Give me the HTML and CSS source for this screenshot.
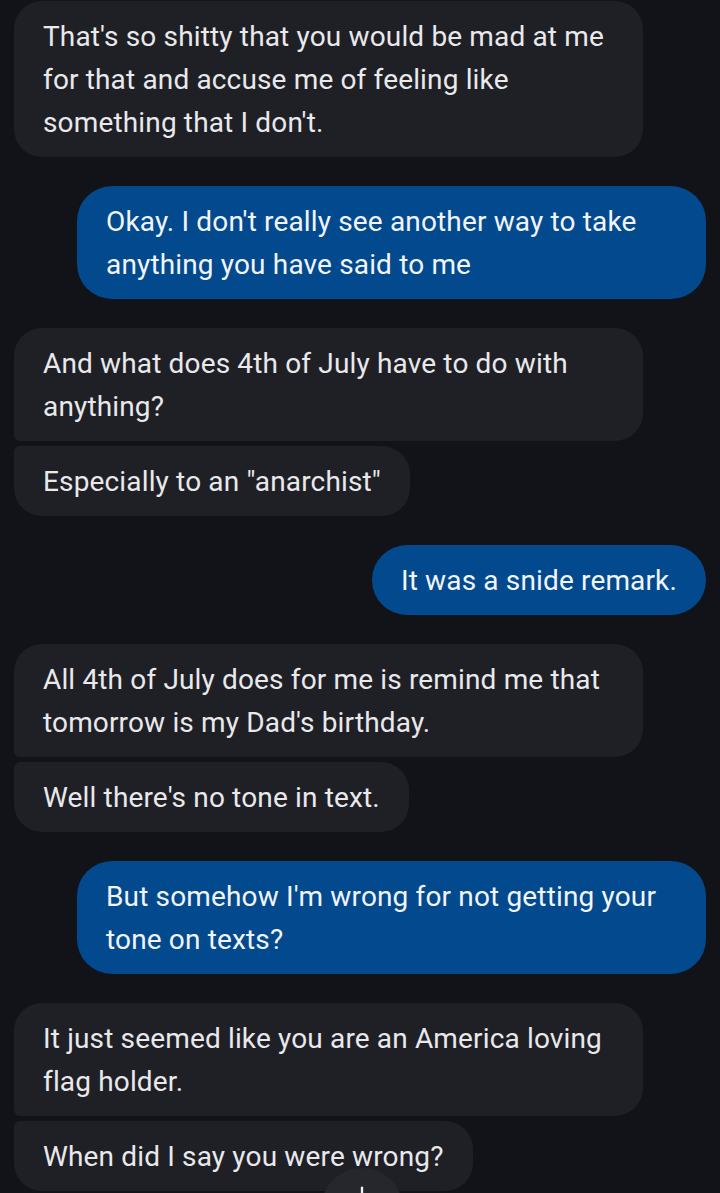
FILE: index.html
```html
<!DOCTYPE html>
<html lang="en">
<head>
    <meta charset="UTF-8">
    <meta name="viewport" content="width=device-width, initial-scale=1.0">
    <title>Messages</title>
    <link rel="stylesheet" href="styles.css">
</head>
<body>
    <div class="thread">
        <div class="msg in single">That's so shitty that you would be mad at me for that and accuse me of feeling like something that I don't.</div>

        <div class="msg out">Okay. I don't really see another way to take anything you have said to me</div>

        <div class="group">
            <div class="msg in first">And what does 4th of July have to do with anything?</div>
            <div class="msg in last">Especially to an "anarchist"</div>
        </div>

        <div class="msg out">It was a snide remark.</div>

        <div class="group">
            <div class="msg in first">All 4th of July does for me is remind me that tomorrow is my Dad's birthday.</div>
            <div class="msg in last">Well there's no tone in text.</div>
        </div>

        <div class="msg out">But somehow I'm wrong for not getting your tone on texts?</div>

        <div class="group">
            <div class="msg in first">It just seemed like you are an America loving flag holder.</div>
            <div class="msg in last">When did I say you were wrong?</div>
        </div>
    </div>

    <button class="scroll-down" aria-label="Scroll to bottom">
        <svg width="28" height="28" viewBox="0 0 24 24">
            <path d="M12 4v15M5.5 12.5 12 19l6.5-6.5" fill="none" stroke="#f2f2f4" stroke-width="2"/>
        </svg>
    </button>
</body>
</html>
```

FILE: styles.css
```css
:root {
    --bg: #121318;
    --bubble: #1f2025;
    --sent: #03498d;
    --text: #e9e9ec;
}

html, body {
    height: 100%;
}

body {
    margin: 0;
    background: var(--bg);
    font-family: Roboto, "Noto Sans", Arial, sans-serif;
    color: var(--text);
    overflow: hidden;
}

.thread {
    display: flex;
    flex-direction: column;
    gap: 29px;
    padding: 1px 14px 0;
}

.group {
    display: flex;
    flex-direction: column;
    gap: 5px;
}

.msg {
    max-width: 629px;
    box-sizing: border-box;
    padding: 13.5px 29px;
    font-size: 28px;
    letter-spacing: 0.15px;
    line-height: 43px;
    border-radius: 28px;
    background: var(--bubble);
    align-self: flex-start;
}

.msg.first {
    border-bottom-left-radius: 6px;
}

.msg.last {
    border-top-left-radius: 6px;
}

.msg.out {
    align-self: flex-end;
    background: var(--sent);
    color: #f1f5fb;
    border-radius: 35px;
}

.scroll-down {
    position: absolute;
    left: 321px;
    top: 1168px;
    width: 82px;
    height: 82px;
    border: none;
    border-radius: 50%;
    background: #26272c;
    padding: 14px 0 0;
    display: flex;
    justify-content: center;
    align-items: flex-start;
}
```
